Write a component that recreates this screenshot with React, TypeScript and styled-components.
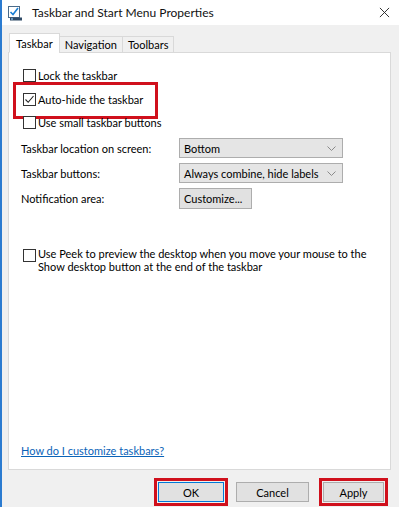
import { createGlobalStyle, styled } from "styled-components";

const GlobalStyle = createGlobalStyle`
  html, body {
    margin: 0;
    padding: 0;
    background: #ffffff;
  }
  * {
    box-sizing: border-box;
  }
`;

export default function App() {
  return (
    <>
      <GlobalStyle />
      <Window>
        <TitleBar>
          <AppIcon viewBox="0 0 16 16">
            <rect x="1.5" y="1.5" width="11" height="11" fill="#ffffff" stroke="#4a6b8a" />
            <path d="M3.5 7 L6 9.5 L11 3" fill="none" stroke="#1a7fd4" strokeWidth="1.6" />
            <rect x="3" y="12.5" width="12" height="3" fill="#2f4a66" />
            <rect x="4" y="13.3" width="2" height="1.4" fill="#7fb8e6" />
          </AppIcon>
          <Title>Taskbar and Start Menu Properties</Title>
          <CloseButton viewBox="0 0 12 12">
            <path d="M1 1 L11 11 M11 1 L1 11" stroke="#222" strokeWidth="1" />
          </CloseButton>
        </TitleBar>
        <Body>
          <TabStrip>
            <Tab $active>Taskbar</Tab>
            <Tab>Navigation</Tab>
            <Tab>Toolbars</Tab>
          </TabStrip>
          <Panel>
            <CheckRow>
              <Box />
              <CheckText>Lock the taskbar</CheckText>
            </CheckRow>
            <CheckRow $marked $top={8}>
              <Box>
                <svg width="11" height="11" viewBox="0 0 11 11">
                  <path d="M1.5 5.5 L4.2 8.3 L9.5 2" fill="none" stroke="#222" strokeWidth="1.1" />
                </svg>
              </Box>
              <CheckText>Auto-hide the taskbar</CheckText>
            </CheckRow>
            <CheckRow $top={7}>
              <Box />
              <CheckText>Use small taskbar buttons</CheckText>
            </CheckRow>
            <SettingsGrid>
              <Label>Taskbar location on screen:</Label>
              <Select>
                <span>Bottom</span>
                <Chevron />
              </Select>
              <Label>Taskbar buttons:</Label>
              <Select>
                <span>Always combine, hide labels</span>
                <Chevron />
              </Select>
              <Label>Notification area:</Label>
              <SmallButton>Customize...</SmallButton>
            </SettingsGrid>
            <PeekRow>
              <Box />
              <PeekText>
                Use Peek to preview the desktop when you move your mouse to the
                <br />
                Show desktop button at the end of the taskbar
              </PeekText>
            </PeekRow>
            <Spacer />
            <HelpLink href="#">How do I customize taskbars?</HelpLink>
          </Panel>
        </Body>
        <Footer>
          <Marked>
            <DialogButton $width={66} $focused>OK</DialogButton>
          </Marked>
          <DialogButton $width={73}>Cancel</DialogButton>
          <Marked $gapLeft={10}>
            <DialogButton $width={61}>Apply</DialogButton>
          </Marked>
        </Footer>
      </Window>
    </>
  );
}

function Chevron() {
  return (
    <ChevronSvg viewBox="0 0 9 5">
      <path d="M0.5 0.5 L4.5 4.5 L8.5 0.5" fill="none" stroke="#8a8a8a" strokeWidth="1" />
    </ChevronSvg>
  );
}

const Window = styled.div`
  width: 399px;
  height: 507px;
  display: flex;
  flex-direction: column;
  background: #f0f0f0;
  border-left: 2px solid #2b7bd0;
  overflow: hidden;
  font-family: Lato, "Liberation Sans", sans-serif;
  font-size: 11px;
  color: #000;
`;

const TitleBar = styled.div`
  height: 25px;
  flex-shrink: 0;
  display: flex;
  align-items: center;
  background: #ffffff;
  padding-left: 5px;
`;

const AppIcon = styled.svg`
  width: 16px;
  height: 16px;
`;

const Title = styled.div`
  margin-left: 9px;
  font-size: 12px;
  color: #111;
`;

const CloseButton = styled.svg`
  width: 11px;
  height: 11px;
  margin-left: auto;
  margin-right: 9px;
`;

const Body = styled.div`
  padding: 8px 8px 0 6px;
  display: flex;
  flex-direction: column;
`;

const TabStrip = styled.div`
  display: flex;
  align-items: flex-end;
  height: 20px;
  padding-left: 1px;
  position: relative;
  z-index: 1;
  margin-bottom: -1px;
`;

const Tab = styled.div<{ $active?: boolean }>`
  height: ${(p) => (p.$active ? "20px" : "17px")};
  padding: ${(p) => (p.$active ? "1px 6px 0 6px" : "0 5px")};
  display: flex;
  align-items: center;
  background: ${(p) => (p.$active ? "#ffffff" : "#f0f0f0")};
  border: 1px solid #d9d9d9;
  border-bottom: ${(p) => (p.$active ? "1px solid #ffffff" : "1px solid #d9d9d9")};
  margin-left: ${(p) => (p.$active ? "0" : "-1px")};
`;

const Panel = styled.div`
  width: 383px;
  height: 418px;
  background: #ffffff;
  border: 1px solid #d9d9d9;
  padding: 14px 0 11px 12px;
  display: flex;
  flex-direction: column;
`;

const CheckRow = styled.div<{ $marked?: boolean; $top?: number }>`
  display: flex;
  align-items: center;
  height: 16px;
  margin-top: ${(p) => p.$top ?? 0}px;
  padding-left: 2px;
  position: relative;
  align-self: flex-start;
  ${(p) =>
    p.$marked
      ? `&::after {
    content: "";
    position: absolute;
    left: -8px;
    top: -9px;
    width: 139px;
    height: 31px;
    border: 3px solid #d0101c;
    pointer-events: none;
  }`
      : ""}
`;

const Box = styled.span`
  width: 13px;
  height: 13px;
  flex-shrink: 0;
  border: 1px solid #333333;
  background: #ffffff;
  display: flex;
  align-items: center;
  justify-content: center;
`;

const CheckText = styled.span`
  margin-left: 2px;
  white-space: nowrap;
`;

const SettingsGrid = styled.div`
  display: grid;
  grid-template-columns: 158px 164px;
  grid-auto-rows: 20px;
  row-gap: 5px;
  align-items: center;
  margin-top: 8px;
`;

const Label = styled.div`
  white-space: nowrap;
`;

const Select = styled.div`
  height: 20px;
  display: flex;
  align-items: center;
  justify-content: space-between;
  padding: 0 6px 0 4px;
  background: #e5e5e5;
  border: 1px solid #adadad;
  white-space: nowrap;
`;

const ChevronSvg = styled.svg`
  width: 9px;
  height: 5px;
`;

const SmallButton = styled.div`
  justify-self: start;
  height: 21px;
  width: 73px;
  display: flex;
  align-items: center;
  padding-left: 4px;
  background: #e1e1e1;
  border: 1px solid #adadad;
  white-space: nowrap;
`;

const PeekRow = styled.div`
  display: flex;
  align-items: flex-start;
  margin-top: 41px;
  padding-left: 2px;
`;

const PeekText = styled.div`
  margin-left: 2px;
  line-height: 13px;
  margin-top: -2px;
  white-space: nowrap;
`;

const Spacer = styled.div`
  flex: 1;
`;

const HelpLink = styled.a`
  color: #0a63b8;
  text-decoration: underline;
  align-self: flex-start;
  line-height: 15px;
`;

const Footer = styled.div`
  display: flex;
  justify-content: flex-end;
  align-items: center;
  gap: 8px;
  padding: 8px 11px 0 0;
`;

const Marked = styled.div<{ $gapLeft?: number }>`
  border: 3px solid #d0101c;
  padding: 1px;
  margin-left: ${(p) => (p.$gapLeft ? p.$gapLeft - 8 : 0)}px;
`;

const DialogButton = styled.div<{ $width: number; $focused?: boolean }>`
  width: ${(p) => p.$width}px;
  height: 20px;
  display: flex;
  align-items: center;
  justify-content: center;
  background: #e1e1e1;
  border: 1px solid ${(p) => (p.$focused ? "#0078d7" : "#adadad")};
`;
